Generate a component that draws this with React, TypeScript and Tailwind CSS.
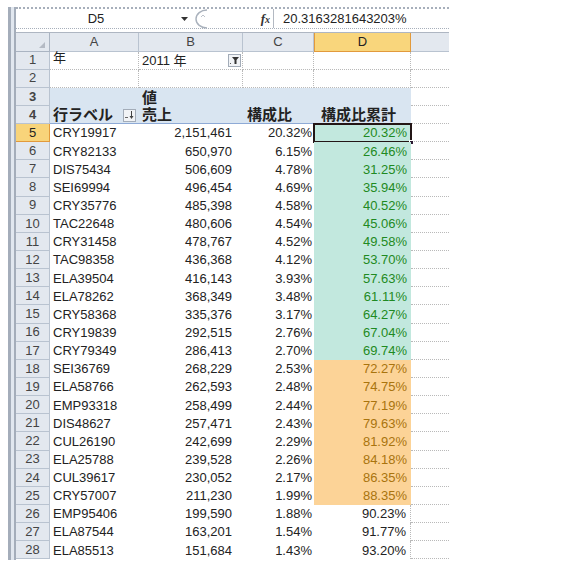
import React from 'react'

type Kind = 'blue' | 'orange' | 'plain'

const rows: [string, string, string, string, Kind][] = [
  ['CRY19917', '2,151,461', '20.32%', '20.32%', 'blue'],
  ['CRY82133', '650,970', '6.15%', '26.46%', 'blue'],
  ['DIS75434', '506,609', '4.78%', '31.25%', 'blue'],
  ['SEI69994', '496,454', '4.69%', '35.94%', 'blue'],
  ['CRY35776', '485,398', '4.58%', '40.52%', 'blue'],
  ['TAC22648', '480,606', '4.54%', '45.06%', 'blue'],
  ['CRY31458', '478,767', '4.52%', '49.58%', 'blue'],
  ['TAC98358', '436,368', '4.12%', '53.70%', 'blue'],
  ['ELA39504', '416,143', '3.93%', '57.63%', 'blue'],
  ['ELA78262', '368,349', '3.48%', '61.11%', 'blue'],
  ['CRY58368', '335,376', '3.17%', '64.27%', 'blue'],
  ['CRY19839', '292,515', '2.76%', '67.04%', 'blue'],
  ['CRY79349', '286,413', '2.70%', '69.74%', 'blue'],
  ['SEI36769', '268,229', '2.53%', '72.27%', 'orange'],
  ['ELA58766', '262,593', '2.48%', '74.75%', 'orange'],
  ['EMP93318', '258,499', '2.44%', '77.19%', 'orange'],
  ['DIS48627', '257,471', '2.43%', '79.63%', 'orange'],
  ['CUL26190', '242,699', '2.29%', '81.92%', 'orange'],
  ['ELA25788', '239,528', '2.26%', '84.18%', 'orange'],
  ['CUL39617', '230,052', '2.17%', '86.35%', 'orange'],
  ['CRY57007', '211,230', '1.99%', '88.35%', 'orange'],
  ['EMP95406', '199,590', '1.88%', '90.23%', 'plain'],
  ['ELA87544', '163,201', '1.54%', '91.77%', 'plain'],
  ['ELA85513', '151,684', '1.43%', '93.20%', 'plain'],
]

const grid = 'border-dotted border-[#b9b9b9]'

function RowHead({ n, active }: { n: number; active?: boolean }) {
  return (
    <div
      className={
        'w-[34px] shrink-0 flex items-center justify-center border-r border-b text-[13px] ' +
        (active
          ? 'bg-[#f8d47a] border-[#e29a3c] text-[#222]'
          : 'bg-[#e3e8ef] border-[#b9c3d0] text-[#444]')
      }
    >
      {n}
    </div>
  )
}

function FilterButton() {
  return (
    <div className="w-[13px] h-[13px] border border-[#a3acb8] bg-[#f1f3f6] flex items-center justify-center">
      <svg width="11" height="11" viewBox="0 0 11 11">
        <rect x="1" y="8" width="1" height="1" fill="#555" />
        <path d="M3 2 H10 L7.5 5 V9 H5.5 V5 Z" fill="#333" />
      </svg>
    </div>
  )
}

function SortButton() {
  return (
    <div className="w-[13px] h-[13px] border border-[#a3acb8] bg-[#f1f3f6] flex items-center justify-center">
      <svg width="11" height="11" viewBox="0 0 11 11">
        <rect x="1" y="7" width="3" height="1" fill="#666" />
        <path d="M7.5 1 V8" stroke="#444" strokeWidth="1" />
        <path d="M5.5 6 L7.5 9 L9.5 6 Z" fill="#444" />
      </svg>
    </div>
  )
}

export default function App() {
  return (
    <div className="w-[567px] h-[568px] bg-white pt-[7px] pl-[8px] font-['Liberation_Sans','Noto_Sans_CJK_JP',sans-serif] text-[#222] overflow-hidden">
      <div className="flex">
        {/* window frame edge */}
        <div className="w-[8px] h-[553px] shrink-0 border-l-[3px] border-r-2 border-[#a4adba] bg-[#e1e7ef]" />

        <div className="w-[433px] shrink-0">
          {/* formula bar */}
          <div className="h-[22px] flex items-center border-t-2 border-b border-dotted border-[#a7afbb] text-[13px]">
            <div className="w-[160px] text-center">D5</div>
            <div className="w-[16px] flex justify-center">
              <svg width="7" height="4" viewBox="0 0 7 4">
                <path d="M0 0 H7 L3.5 4 Z" fill="#333" />
              </svg>
            </div>
            <div className="w-[24px] h-full flex items-center">
              <svg width="22" height="20" viewBox="0 0 22 20">
                <path d="M15 1 A 11 9 0 0 0 15 19" fill="none" stroke="#a9b1bc" strokeWidth="1.4" />
                <path d="M9 8 L11 6 L13 8" fill="none" stroke="#bcc2ca" strokeWidth="1" />
              </svg>
            </div>
            <div className="w-[57px] flex justify-end pr-[3px]">
              <span className="font-['Liberation_Serif',serif] italic font-bold text-[13px] text-[#333]">
                f<span className="text-[10px]">x</span>
              </span>
            </div>
            <div className="w-px h-full bg-[#b3b9c2]" />
            <div className="pl-[9px]">20.3163281643203%</div>
          </div>
          <div className="h-[4px] border-b border-[#aeb6c2]" />

          {/* column headers */}
          <div className="flex h-[18.5px] text-[13px] text-[#444]">
            <div className="w-[34px] relative bg-[#e3e8ef] border-r border-b border-[#aab4c2]">
              <svg className="absolute right-[4px] bottom-[3px]" width="6" height="6" viewBox="0 0 6 6">
                <path d="M6 0 V6 H0 Z" fill="#b4bac4" />
              </svg>
            </div>
            <div className="w-[89px] flex items-center justify-center bg-[#e3e8ef] border-r border-b border-[#b9c3d0]">A</div>
            <div className="w-[104px] flex items-center justify-center bg-[#e3e8ef] border-r border-b border-[#b9c3d0]">B</div>
            <div className="w-[71px] flex items-center justify-center bg-[#e3e8ef] border-r border-b border-[#b9c3d0]">C</div>
            <div className="w-[97px] flex items-center justify-center bg-[#f9d67c] border border-t-0 border-[#e29a3c] text-[#222]">D</div>
            <div className="w-[38px] bg-[#e3e8ef] border-b border-[#b9c3d0]" />
          </div>

          {/* row 1 */}
          <div className="flex h-[18.15px] text-[13px]">
            <RowHead n={1} />
            <div className={'w-[89px] flex items-end pb-[1px] pl-[3px] border-r border-b ' + grid}>年</div>
            <div className={'w-[104px] flex items-center pl-[3px] pr-[1px] border-r border-b ' + grid}>
              <span className="mt-[2px]">2011 年</span>
              <div className="ml-auto">
                <FilterButton />
              </div>
            </div>
            <div className={'w-[71px] border-r border-b ' + grid} />
            <div className={'w-[97px] border-r border-b ' + grid} />
            <div className={'w-[38px] border-b ' + grid} />
          </div>

          {/* row 2 */}
          <div className="flex h-[18.15px] text-[13px]">
            <RowHead n={2} />
            <div className={'w-[89px] border-r border-b ' + grid} />
            <div className={'w-[104px] border-r border-b ' + grid} />
            <div className={'w-[71px] border-r border-b ' + grid} />
            <div className={'w-[97px] border-r border-b ' + grid} />
            <div className={'w-[38px] border-b ' + grid} />
          </div>

          {/* row 3 */}
          <div className="flex h-[18.15px] text-[15px] font-bold">
            <RowHead n={3} />
            <div className="w-[89px] bg-[#d9e5f1]" />
            <div className="w-[104px] bg-[#d9e5f1] flex items-end pl-[3px] leading-[17px]">値</div>
            <div className="w-[71px] bg-[#d9e5f1]" />
            <div className="w-[97px] bg-[#d9e5f1]" />
            <div className={'w-[38px] border-b ' + grid} />
          </div>

          {/* row 4 */}
          <div className="flex h-[18.15px] text-[15px] font-bold">
            <RowHead n={4} />
            <div className="w-[89px] bg-[#d9e5f1] border-b border-[#8eaad6] flex items-end pl-[3px] leading-[17px]">
              <span>行ラベル</span>
              <div className="ml-auto mr-[3px] mb-[1px]">
                <SortButton />
              </div>
            </div>
            <div className="w-[104px] bg-[#d9e5f1] border-b border-[#8eaad6] flex items-end pl-[3px] leading-[17px]">売上</div>
            <div className="w-[71px] bg-[#d9e5f1] border-b border-[#8eaad6] flex items-end pl-[4px] leading-[17px]">構成比</div>
            <div className="w-[97px] bg-[#d9e5f1] border-b border-[#8eaad6] flex items-end pl-[7px] leading-[17px]">構成比累計</div>
            <div className={'w-[38px] border-b ' + grid} />
          </div>

          {/* data rows */}
          {rows.map(([label, sales, ratio, cum, kind], i) => {
            const n = i + 5
            const dClass =
              kind === 'blue'
                ? 'bg-[#c2e8de] text-[#1f8a22]'
                : kind === 'orange'
                  ? 'bg-[#fcd397] text-[#a9740e]'
                  : 'border-r ' + grid + ' text-[#222]'
            return (
              <div key={label} className="flex h-[18.15px] text-[13px]">
                <RowHead n={n} active={n === 5} />
                <div className="w-[89px] flex items-center pl-[3px]">{label}</div>
                <div className="w-[104px] flex items-center justify-end pr-[11px]">{sales}</div>
                <div className="w-[71px] flex items-center justify-end pr-[2px]">{ratio}</div>
                <div className={'w-[97px] relative flex items-center justify-end pr-[4px] ' + dClass}>
                  {cum}
                  {n === 5 && (
                    <>
                      <div className="absolute -left-[1px] -top-[1px] -right-[1px] -bottom-[1px] border-2 border-[#231616]" />
                      <div className="absolute -right-[3px] -bottom-[3px] w-[5px] h-[5px] bg-[#2a1830] border border-white" />
                    </>
                  )}
                </div>
                <div className={'w-[38px] border-b ' + grid} />
              </div>
            )
          })}
        </div>
      </div>
    </div>
  )
}
